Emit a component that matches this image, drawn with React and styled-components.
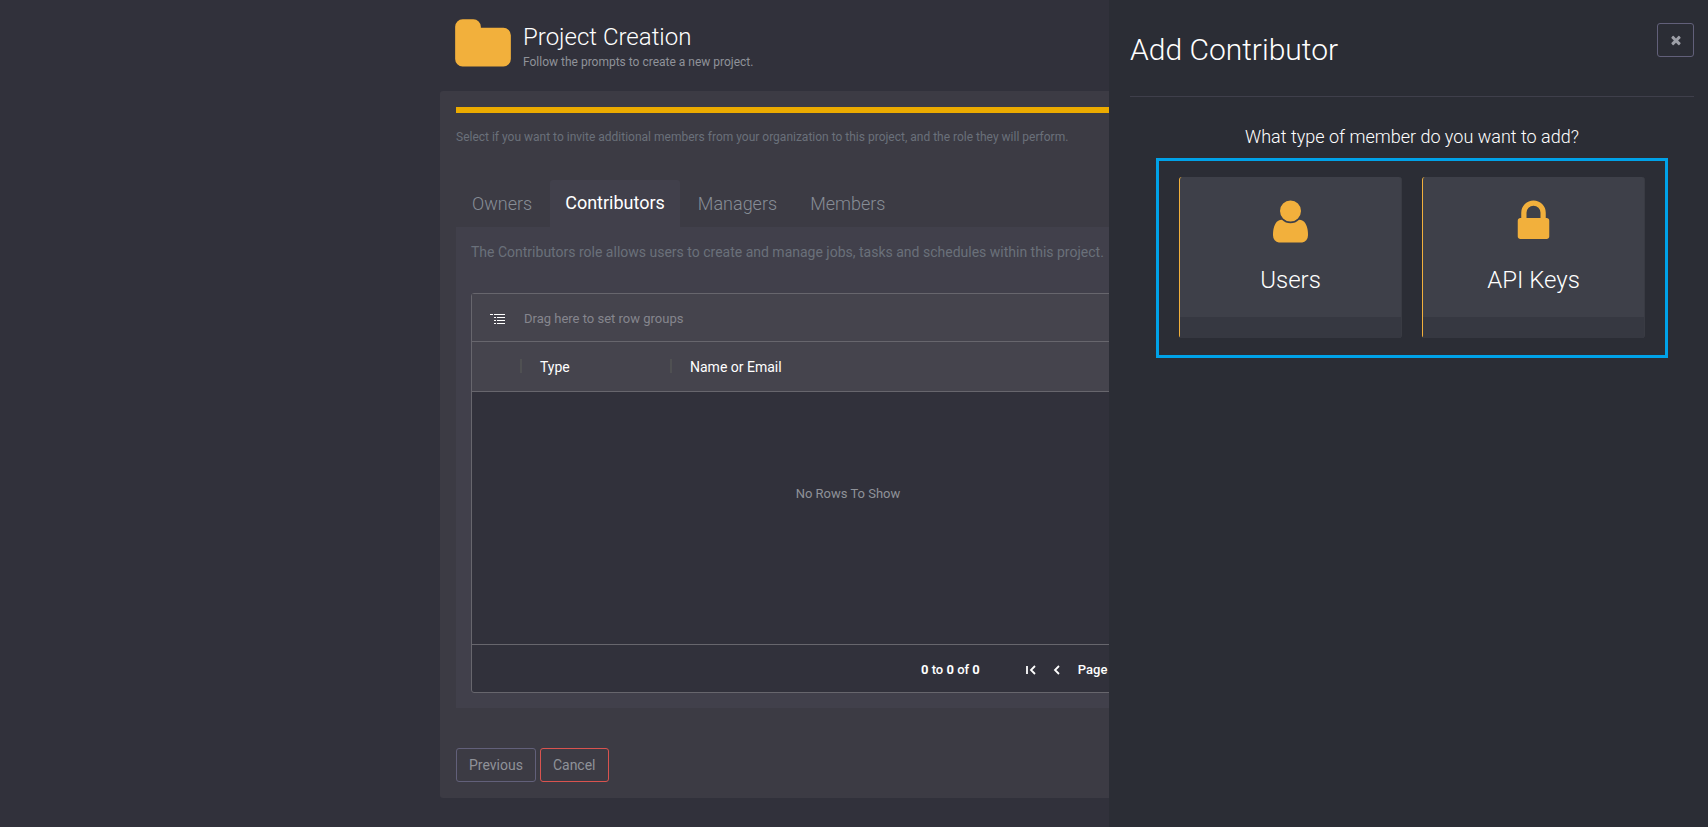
import React, { useState } from "react";
import styled, { createGlobalStyle } from "styled-components";

const GlobalStyle = createGlobalStyle`
  * {
    box-sizing: border-box;
  }

  body {
    margin: 0;
    background: #ffffff;
    color: #ffffff;
    font-family: Roboto, "Liberation Sans", sans-serif;
    font-size: 14px;
    line-height: 20px;
  }

  button {
    font-family: inherit;
  }
`;

const icons = {
  folder:
    "M1728 608v704q0 92-66 158t-158 66h-1216q-92 0-158-66t-66-158v-960q0-92 66-158t158-66h320q92 0 158 66t66 158v32h672q92 0 158 66t66 158z",
  user:
    "M1536 1399q0 109-62.5 187t-150.5 78h-854q-88 0-150.5-78t-62.5-187q0-85 8.5-160.5t31.5-152 58.5-131 94-89 134.5-34.5q131 128 313 128t313-128q76 0 134.5 34.5t94 89 58.5 131 31.5 152 8.5 160.5zm-256-887q0 159-112.5 271.5t-271.5 112.5-271.5-112.5-112.5-271.5 112.5-271.5 271.5-112.5 271.5 112.5 112.5 271.5z",
  lock:
    "M640 768h512v-192q0-106-75-181t-181-75-181 75-75 181v192zm832 96v576q0 40-28 68t-68 28h-960q-40 0-68-28t-28-68v-576q0-40 28-68t68-28h32v-192q0-184 132-316t316-132 316 132 132 316v192h32q40 0 68 28t28 68z",
  close:
    "M1490 1322q0 40-28 68l-136 136q-28 28-68 28t-68-28l-294-294-294 294q-28 28-68 28t-68-28l-136-136q-28-28-28-68t28-68l294-294-294-294q-28-28-28-68t28-68l136-136q28-28 68-28t68 28l294 294 294-294q28-28 68-28t68 28l136 136q28 28 28 68t-28 68l-294 294 294 294q28 28 28 68z",
};

const Icon = ({ name, size }) => (
  <svg width={size} height={size} viewBox="0 0 1792 1792" aria-hidden="true">
    <path fill="currentColor" d={icons[name]} />
  </svg>
);

const GroupIcon = () => (
  <svg width="16" height="12" viewBox="0 0 16 12" aria-hidden="true">
    <path
      d="M0 1.5h3M4 1.5h11M4 4.5h2M7 4.5h8M4 7.5h2M7 7.5h8M4 10.5h2M7 10.5h8"
      stroke="currentColor"
      fill="none"
    />
  </svg>
);

const ArrowIcon = ({ d }) => (
  <svg width="10" height="10" viewBox="0 0 10 10" aria-hidden="true">
    <path d={d} stroke="currentColor" strokeWidth="1.8" fill="none" />
  </svg>
);

const tabs = [
  {
    name: "Owners",
    text: "The Owners role allows users full control of this project.",
  },
  {
    name: "Contributors",
    text:
      "The Contributors role allows users to create and manage jobs, tasks and schedules within this project.",
  },
  {
    name: "Managers",
    text: "The Managers role allows users to manage this project.",
  },
  {
    name: "Members",
    text: "The Members role allows users to view this project.",
  },
];

const memberTypes = [
  { label: "Users", icon: "user" },
  { label: "API Keys", icon: "lock" },
];

const MembersGrid = () => (
  <Grid>
    <GroupBar>
      <GroupIcon />
      <span>Drag here to set row groups</span>
    </GroupBar>
    <Table>
      <thead>
        <tr>
          <HeadCell $width="50px" aria-label="Select" />
          <HeadCell $width="150px">Type</HeadCell>
          <HeadCell>Name or Email</HeadCell>
        </tr>
      </thead>
      <tbody>
        <tr>
          <EmptyCell colSpan={3}>No Rows To Show</EmptyCell>
        </tr>
      </tbody>
    </Table>
    <Pager>
      <PagerSummary>
        <b>0</b> to <b>0</b> of <b>0</b>
      </PagerSummary>
      <PagerButton aria-label="First page">
        <ArrowIcon d="M1 1v8M9 1l-4 4 4 4" />
      </PagerButton>
      <PagerButton aria-label="Previous page">
        <ArrowIcon d="M7 1l-4 4 4 4" />
      </PagerButton>
      <PagerPage>
        Page <b>0</b> of <b>0</b>
      </PagerPage>
      <PagerButton aria-label="Next page">
        <ArrowIcon d="M3 1l4 4-4 4" />
      </PagerButton>
      <PagerButton aria-label="Last page">
        <ArrowIcon d="M9 1v8M1 1l4 4-4 4" />
      </PagerButton>
    </Pager>
  </Grid>
);

const AddContributor = ({ onClose }) => (
  <Drawer>
    <DrawerHeader>
      <DrawerTitle>Add Contributor</DrawerTitle>
      <CloseButton aria-label="Close" onClick={onClose}>
        <Icon name="close" size={14} />
      </CloseButton>
    </DrawerHeader>
    <Question>What type of member do you want to add?</Question>
    <TypeList>
      {memberTypes.map((type) => (
        <TypeCard key={type.label}>
          <TypeBody>
            <Icon name={type.icon} size={49} />
            <TypeLabel>{type.label}</TypeLabel>
          </TypeBody>
          <TypeFooter />
        </TypeCard>
      ))}
    </TypeList>
  </Drawer>
);

const App = () => {
  const [activeTab, setActiveTab] = useState("Contributors");
  const [drawerOpen, setDrawerOpen] = useState(true);
  const current = tabs.find((tab) => tab.name === activeTab);

  return (
    <>
      <GlobalStyle />
      <Page>
        <Content>
          <PageHeader>
            <Icon name="folder" size={60} />
            <div>
              <Title>Project Creation</Title>
              <Subtitle>Follow the prompts to create a new project.</Subtitle>
            </div>
          </PageHeader>
          <Card>
            <Progress />
            <Hint>
              Select if you want to invite additional members from your
              organization to this project, and the role they will perform.
            </Hint>
            <TabList role="tablist">
              {tabs.map((tab) => (
                <TabButton
                  key={tab.name}
                  role="tab"
                  aria-selected={tab.name === activeTab}
                  $active={tab.name === activeTab}
                  onClick={() => setActiveTab(tab.name)}
                >
                  {tab.name}
                </TabButton>
              ))}
            </TabList>
            <TabPanel role="tabpanel">
              <RoleText>{current.text}</RoleText>
              <MembersGrid />
            </TabPanel>
            <Actions>
              <Button>Previous</Button>
              <Button $danger>Cancel</Button>
            </Actions>
          </Card>
        </Content>
        {drawerOpen && <AddContributor onClose={() => setDrawerOpen(false)} />}
      </Page>
    </>
  );
};

const Page = styled.div`
  position: relative;
  min-height: calc(100vh - 4px);
  padding: 0 12px 28px 0;
  background: #31313b;
  overflow: hidden;
`;

const Content = styled.main`
  width: 100%;
  max-width: 816px;
  margin: 0 auto;
`;

const PageHeader = styled.header`
  display: flex;
  gap: 10px;
  height: 91px;
  padding: 15px 13px 0;
  color: #f2b03c;
`;

const Title = styled.h1`
  margin: 7px 0 0;
  color: #ffffff;
  font-size: 24px;
  font-weight: 300;
  line-height: 30px;
`;

const Subtitle = styled.p`
  margin: 0;
  color: #8f9299;
  font-size: 12px;
`;

const Card = styled.section`
  padding: 16px;
  border-radius: 3px;
  background: #3c3b44;
`;

const Progress = styled.div`
  height: 6px;
  background: #ecab00;
`;

const Hint = styled.p`
  margin: 14px 0 33px;
  color: #6a707a;
  font-size: 12px;
`;

const TabList = styled.div`
  display: flex;
  gap: 3px;
  padding-left: 1px;
`;

const TabButton = styled.button`
  height: 47px;
  padding: ${(props) => (props.$active ? "0 15px 2px" : "0 15px")};
  border: none;
  border-radius: 3px 3px 0 0;
  background: ${(props) => (props.$active ? "#41404b" : "transparent")};
  color: ${(props) => (props.$active ? "#ffffff" : "#878d96")};
  font-size: 18px;
  font-weight: ${(props) => (props.$active ? 400 : 300)};
  cursor: pointer;
`;

const TabPanel = styled.div`
  padding: 15px;
  background: #41404b;
`;

const RoleText = styled.p`
  margin: 0 0 31px;
  color: #6a707a;
  white-space: nowrap;
`;

const Grid = styled.div`
  border: 1px solid #67666d;
  border-radius: 3px;
  background: #31313b;
`;

const GroupBar = styled.div`
  display: flex;
  align-items: center;
  gap: 18px;
  height: 48px;
  padding: 2px 18px 0;
  border-bottom: 1px solid #67666d;
  background: #45444d;
  font-size: 13px;

  span {
    color: #85868e;
  }
`;

const Table = styled.table`
  width: 100%;
  border-collapse: collapse;
  table-layout: fixed;
`;

const HeadCell = styled.th`
  width: ${(props) => props.$width || "auto"};
  height: 49px;
  padding: 2px 18px 0;
  border-bottom: 1px solid #67666d;
  background: #45444d;
  font-weight: 400;
  text-align: left;

  &:not(:last-child) {
    background: linear-gradient(#4f5052, #4f5052) right center / 2px 14px
      no-repeat #45444d;
  }
`;

const EmptyCell = styled.td`
  height: 253px;
  padding: 0 0 48px;
  color: #8f9299;
  font-size: 13px;
  text-align: center;
`;

const Pager = styled.div`
  display: flex;
  align-items: center;
  justify-content: flex-end;
  gap: 16px;
  height: 48px;
  padding: 2px 28px 0;
  border-top: 1px solid #67666d;
  font-size: 13px;
  font-weight: 500;
`;

const PagerSummary = styled.span`
  margin-right: 30px;
`;

const PagerPage = styled.span`
  white-space: nowrap;
`;

const PagerButton = styled.button`
  display: flex;
  padding: 0;
  border: none;
  background: none;
  color: #ffffff;
  cursor: pointer;
`;

const Actions = styled.div`
  display: flex;
  gap: 4px;
  margin-top: 40px;
`;

const Button = styled.button`
  height: 34px;
  padding: 0 12px;
  border: 1px solid ${(props) => (props.$danger ? "#d9534f" : "#62607a")};
  border-radius: 3px;
  background: transparent;
  color: #8f9299;
  font-size: 14px;
  cursor: pointer;
`;

const Drawer = styled.aside`
  position: absolute;
  top: 0;
  right: 0;
  bottom: 0;
  width: 599px;
  max-width: 100%;
  padding: 0 14px 0 21px;
  background: #2b2d35;
`;

const DrawerHeader = styled.header`
  display: flex;
  justify-content: space-between;
  align-items: flex-start;
  height: 97px;
  padding-top: 23px;
  border-bottom: 1px solid #3f3f4b;
`;

const DrawerTitle = styled.h2`
  margin: 9px 0 0;
  font-size: 30px;
  font-weight: 300;
  line-height: 36px;
`;

const CloseButton = styled.button`
  display: flex;
  align-items: center;
  justify-content: center;
  width: 37px;
  height: 34px;
  padding: 0;
  border: 1px solid #62607a;
  border-radius: 3px;
  background: transparent;
  color: #9d9fa7;
  cursor: pointer;
`;

const Question = styled.p`
  margin: 30px 0 11px;
  font-size: 18px;
  font-weight: 300;
  text-align: center;
`;

const TypeList = styled.div`
  display: flex;
  gap: 20px;
  max-width: 512px;
  margin: 0 auto;
  padding: 16px 20px 17px;
  border: 3px solid #00a2e8;
`;

const TypeCard = styled.button`
  display: flex;
  flex: 1;
  flex-direction: column;
  padding: 0;
  border: solid #393b43;
  border-width: 0 1px;
  border-left-color: #f2b03c;
  border-radius: 3px;
  background: #3e4049;
  color: #f2b03c;
  cursor: pointer;
`;

const TypeBody = styled.span`
  display: flex;
  flex-direction: column;
  align-items: center;
  width: 100%;
  height: 140px;
  padding-top: 20px;
`;

const TypeLabel = styled.span`
  margin-top: 19px;
  color: #ffffff;
  font-size: 24px;
  font-weight: 300;
  line-height: 30px;
`;

const TypeFooter = styled.span`
  width: 100%;
  height: 21px;
  background: #363841;
`;

export default App;
